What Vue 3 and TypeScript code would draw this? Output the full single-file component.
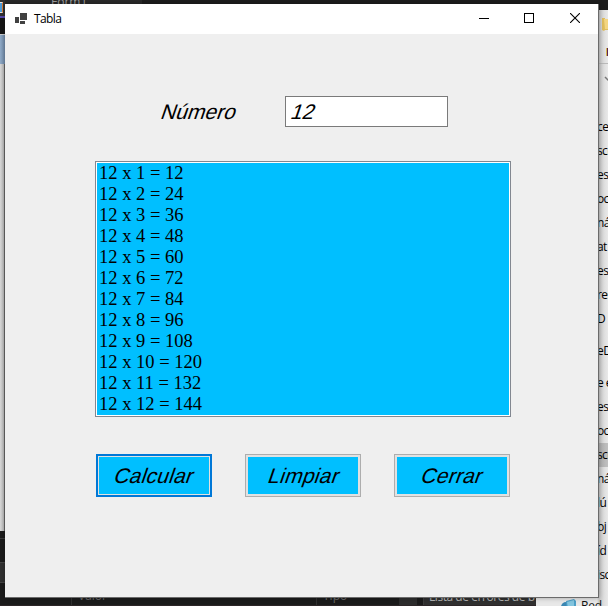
<script setup lang="ts">
import { computed, ref } from 'vue'

const numero = ref('12')
const calculado = ref(true)

const filas = computed<string[]>(() => {
  const n = Number(numero.value)
  if (!calculado.value || !n) return []
  return Array.from({ length: 12 }, (_, i) => `${n} x ${i + 1} = ${n * (i + 1)}`)
})

interface Entrada {
  texto: string
  tipo?: 'seleccion' | 'alta' | 'baja'
}

const explorador: Entrada[] = [
  { texto: 'ces' }, { texto: 'scr' }, { texto: 'es' }, { texto: 'oc' }, { texto: 'ná' },
  { texto: 'at' }, { texto: 'es' }, { texto: 'res' }, { texto: 'D' }, { texto: 'eD', tipo: 'alta' },
  { texto: 'e e', tipo: 'baja' }, { texto: 'es' }, { texto: 'oc' }, { texto: 'scr', tipo: 'seleccion' },
  { texto: 'ná' }, { texto: 'lú' }, { texto: 'bj' }, { texto: 'íd' }, { texto: 'isc' },
]

function limpiar(): void {
  numero.value = ''
  calculado.value = false
}
</script>

<template>
  <div class="desktop">
    <div class="editor-tabs"><span class="tab">Form1</span></div>
    <div class="left-edge">
      <i class="e-dark"><b class="e-icon"></b></i>
      <i class="e-purple"></i>
      <i class="e-black"></i>
      <i class="e-blue"></i>
      <i class="e-light"></i>
      <i class="e-black2"></i>
      <i class="e-gray"></i>
    </div>
    <div class="bottom-panel">
      <span class="col col-a">Valor</span>
      <span class="col col-b">Tipo</span>
      <span class="scroll"></span>
      <span class="search">Lista de errores de b</span>
    </div>
    <div class="explorer">
      <div class="ribbon">
        <svg class="folder" width="10" height="15" viewBox="0 0 10 15">
          <path d="M1 1h3v1h6v11H4l-1 1-2-1z" fill="#dfbd5e" />
          <path d="M3 2h7v10H4z" fill="#f3d581" />
        </svg>
        <i class="mark"></i>
      </div>
      <svg class="chevron" width="8" height="6" viewBox="0 0 8 6">
        <path d="M1 1l3 3 3-3" fill="none" stroke="#777" stroke-width="1.5" />
      </svg>
      <div class="tree">
        <div v-for="(e, i) in explorador" :key="i" class="node" :class="e.tipo">{{ e.texto }}</div>
      </div>
      <div class="network">
        <svg width="16" height="16" viewBox="0 0 16 16">
          <circle cx="5" cy="9" r="5" fill="#3b87b3" />
          <path d="M5 3l8-2 2 2v8l-9 2z" fill="#4d9fc7" />
          <path d="M6 4l7-2v6l-6 2z" fill="#83c5df" />
        </svg>
        <span>Red</span>
      </div>
    </div>

    <main class="window">
      <header class="titlebar">
        <svg class="app-icon" width="12" height="11" viewBox="0 0 12 11" shape-rendering="crispEdges">
          <path d="M5 0h7v7H5zM0 4h4v6H0zM5 8h5v3H5z" fill="#414141" />
        </svg>
        <h1>Tabla</h1>
        <div class="controls">
          <svg width="10" height="10" viewBox="0 0 10 10"><path d="M0 5.5h10" stroke="#000" /></svg>
          <svg width="10" height="10" viewBox="0 0 10 10"><rect x=".5" y=".5" width="9" height="9" fill="none" stroke="#000" /></svg>
          <svg width="10" height="10" viewBox="0 0 10 10"><path d="M0 0l10 10M10 0L0 10" stroke="#000" stroke-width="1.1" /></svg>
        </div>
      </header>
      <div class="form">
        <div class="field">
          <label for="numero"><span class="slant">Número</span></label>
          <div class="box"><input id="numero" v-model="numero" class="slant" autocomplete="off" /></div>
        </div>
        <div class="list">
          <div v-for="fila in filas" :key="fila" class="row">{{ fila }}</div>
        </div>
        <div class="buttons">
          <button class="primary" @click="calculado = true"><span class="slant">Calcular</span></button>
          <button @click="limpiar"><span class="slant">Limpiar</span></button>
          <button><span class="slant">Cerrar</span></button>
        </div>
      </div>
    </main>
  </div>
</template>

<style>
body {
  margin: 0;
  overflow: hidden;
}
</style>

<style scoped>
* {
  box-sizing: border-box;
}
.desktop {
  position: relative;
  width: 608px;
  height: 606px;
  overflow: hidden;
  background: #1c1c1c;
  font-family: "Open Sans", "Noto Sans", sans-serif;
}
.editor-tabs {
  position: absolute;
  inset: 0 0 auto 0;
  height: 10px;
  padding-left: 47px;
  overflow: hidden;
  background: linear-gradient(90deg, #292929 142px, #1d1d1d 142px);
}
.tab {
  display: block;
  margin-top: -6px;
  padding-left: 4px;
  font-size: 12px;
  line-height: 16px;
  color: #a0a0a0;
}
.left-edge {
  position: absolute;
  left: 0;
  top: 0;
  width: 5px;
  height: 606px;
  display: flex;
  flex-direction: column;
}
.left-edge i {
  display: block;
  flex: none;
}
.e-dark {
  height: 16px;
  padding-top: 2px;
  background: #303030;
}
.e-icon {
  display: block;
  width: 3px;
  height: 11px;
  background: #4f9dda;
  border: solid #e8e8e8;
  border-width: 1px 1px 1px 0;
  border-right-color: #d77b34;
}
.e-purple {
  height: 2px;
  background: #5649b0;
}
.e-black {
  height: 17px;
  background: #151515;
  border-bottom: 1px solid #ccc;
}
.e-blue {
  height: 29px;
  background: linear-gradient(90deg, #91abc9, #708aa8);
}
.e-light {
  height: 467px;
  background: linear-gradient(90deg, #dadada, #b8b8b8 4px, #666 4px);
}
.e-black2 {
  height: 31px;
  background: linear-gradient(#1b1b1b 7px, #3b3b3b 7px, #3b3b3b 8px, #1b1b1b 8px);
}
.e-gray {
  height: 21px;
  background: #303030;
  border: solid #444;
  border-width: 1px 0;
}
.bottom-panel {
  position: absolute;
  left: 0;
  top: 583px;
  width: 536px;
  height: 23px;
  display: flex;
  overflow: hidden;
  border-bottom: 1px solid #2c2527;
  background: #1b1b1b;
  font-size: 12px;
  line-height: 16px;
  color: #686868;
}
.col {
  padding: 5px 0 0 6px;
  border-left: 1px solid #303030;
}
.col-a {
  width: 245px;
  margin-left: 71px;
}
.col-b {
  width: 83px;
}
.scroll {
  width: 18px;
  background: #2d2d2d;
}
.search {
  flex: 1;
  margin-left: 6px;
  padding: 6px 0 0 5px;
  background: #303030;
  border-left: 1px solid #3c3c3c;
  white-space: nowrap;
  overflow: hidden;
  letter-spacing: -0.45px;
  color: #b5b5b5;
}
.explorer {
  position: absolute;
  left: 536px;
  top: 10px;
  width: 72px;
  height: 596px;
  padding-left: 61px;
  overflow: hidden;
  background: linear-gradient(90deg, #e8e8e8 0 61px, #c7c7c7 63px, #dedede 68px, #e9e9e9 72px);
}
.ribbon {
  height: 54px;
  padding: 7px 0 0 4px;
  border-bottom: 1px solid #b9b9b9;
}
.folder {
  display: block;
}
.mark {
  display: block;
  width: 2px;
  height: 8px;
  margin: 16px 0 0 5px;
  background: linear-gradient(90deg, #d4b64f 1px, #5c2454 1px);
}
.chevron {
  display: block;
  margin: 12px 0 0 7px;
}
.tree {
  margin-top: 33px;
}
.node {
  height: 24px;
  font-size: 12px;
  line-height: 24px;
  letter-spacing: -0.6px;
  white-space: nowrap;
  color: #000;
}
.node.alta {
  height: 32px;
  line-height: 40px;
}
.node.baja {
  height: 32px;
  padding-top: 8px;
}
.node.seleccion {
  background: linear-gradient(90deg, #a9a9a9, #c0c0c0);
}
.network {
  display: flex;
  gap: 4px;
  margin: 11px 0 0 -36px;
  font-size: 12px;
  line-height: 16px;
  letter-spacing: -0.2px;
  color: #111;
}
.window {
  position: absolute;
  left: 5px;
  top: 4px;
  width: 594px;
  height: 594px;
  border: solid #6b6b6b;
  border-width: 0 1px 1px 0;
  background: #efefef;
  box-shadow: 0 0 5px rgba(0, 0, 0, 0.3);
}
.titlebar {
  height: 30px;
  display: flex;
  align-items: center;
  padding: 0 18px 0 10px;
  background: #fff;
}
.app-icon {
  margin-top: -2px;
}
h1 {
  margin: 0 0 0 7px;
  font-size: 12px;
  line-height: 16px;
  font-weight: 400;
  letter-spacing: -0.6px;
  color: #000;
}
.controls {
  display: flex;
  gap: 35.5px;
  margin-left: auto;
  margin-top: -2px;
}
.controls svg {
  display: block;
}
.controls svg:nth-child(2) {
  margin-left: -0.5px;
  margin-right: 0.5px;
}
.form {
  padding: 62px 87px 0 90px;
  font-family: "Liberation Sans", Arial, sans-serif;
  font-size: 21px;
}
.slant {
  display: inline-block;
  transform: skewX(-19deg);
}
.field {
  display: flex;
  height: 31px;
  line-height: 31px;
}
label {
  width: 190px;
  padding-left: 66.5px;
}
.box {
  width: 163px;
  height: 31px;
  padding: 0 4px;
  border: 1px solid #7a7a7a;
  background: #fff;
  line-height: 29px;
}
input {
  width: 150px;
  height: 29px;
  padding: 0 0 0 2px;
  border: 0;
  outline: 0;
  background: transparent;
  font: inherit;
  color: #000;
}
.box input {
  display: block;
  transform-origin: 12px 50%;
}
.list {
  width: 416px;
  height: 256px;
  margin-top: 34px;
  padding: 1px 3px;
  border: 1px solid #828790;
  background: #00bfff;
  box-shadow: inset 0 0 0 1px #fff;
  font-family: "Liberation Serif", "Times New Roman", serif;
  font-size: 18.5px;
}
.row {
  height: 21px;
  line-height: 21px;
  white-space: nowrap;
}
.buttons {
  display: flex;
  gap: 33px;
  margin: 37px 0 0 1px;
}
button {
  width: 116px;
  height: 43px;
  padding: 0 0 0 2px;
  border: 1px solid #adadad;
  background: #00bfff;
  box-shadow: inset 0 0 0 2px #e1e1e1;
  font: inherit;
  letter-spacing: 0.25px;
  color: #000;
}
.primary {
  padding-left: 1px;
  border: 2px solid #0078d7;
  box-shadow: inset 0 0 0 1px #e1e1e1;
}
</style>
